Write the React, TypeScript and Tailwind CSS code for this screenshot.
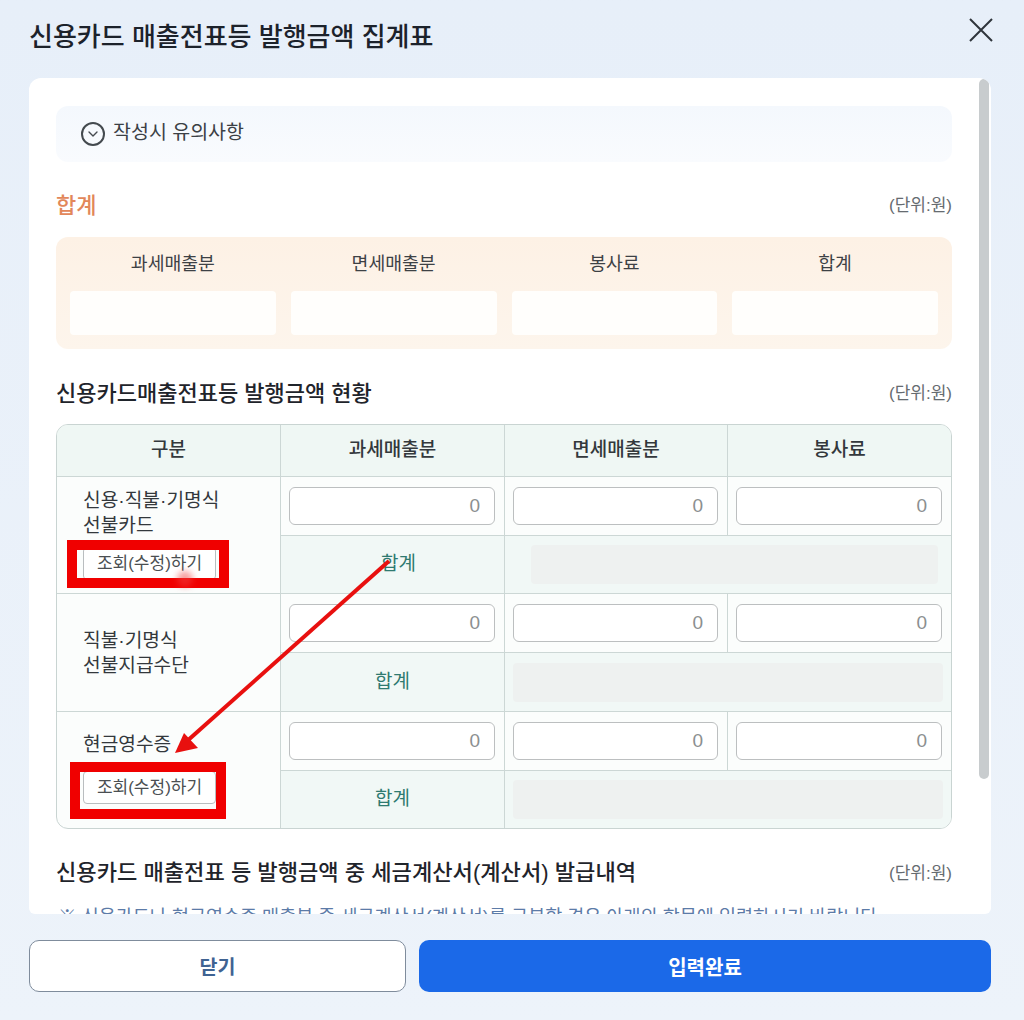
import { ChevronDown } from 'lucide-react'

const font = { fontFamily: '"Liberation Sans", "Noto Sans CJK KR", sans-serif' }

function Unit() {
  return <span className="text-[17px] text-[#666b70] mt-[2px]">(단위:원)</span>
}

function ZeroInput() {
  return (
    <input
      readOnly
      value="0"
      className="w-full h-[38px] rounded-md border border-[#bcbfc0] bg-white pr-3.5 text-right text-[19px] text-[#8b8f90] outline-none"
    />
  )
}

function InquiryButton() {
  return (
    <button className="w-[133px] h-[33px] rounded border border-[#b9bdbf] bg-white text-[17px] text-[#4b4f52]">
      조회(수정)하기
    </button>
  )
}

function AmountCells({ first }: { first?: boolean }) {
  return (
    <div className="flex-1 flex flex-col">
      <div className="h-[59px] flex border-b border-[#ccd7d5]">
        <div className="w-[224px] pl-[8px] pr-[9px] flex items-center border-r border-[#ccd7d5]">
          <ZeroInput />
        </div>
        <div className="w-[223px] pl-[8px] pr-[9px] flex items-center border-r border-[#ccd7d5]">
          <ZeroInput />
        </div>
        <div className="flex-1 pl-[8px] pr-[9px] flex items-center">
          <ZeroInput />
        </div>
      </div>
      <div className="flex-1 flex bg-[#f1f8f6]">
        <div className={`w-[224px] flex items-center justify-center border-r border-[#ccd7d5] text-[19px] text-[#2f7a70] ${first ? 'pl-3' : ''}`}>
          합계
        </div>
        <div className={`flex-1 flex items-center ${first ? 'pl-[26px] pr-[13px]' : 'px-2'}`}>
          <div className="w-full h-[39px] rounded bg-[#eef1f0]" />
        </div>
      </div>
    </div>
  )
}

export default function App() {
  return (
    <div style={font} className="relative w-[1024px] h-[1020px] overflow-hidden bg-gradient-to-b from-[#e7eff9] to-[#edf3fa] flex flex-col pl-[29px] pr-[33px]">
      <header className="h-[78px] shrink-0 flex items-start justify-between pt-[16px]">
        <h1 className="text-[26px] font-medium leading-[42px] text-[#1c222b]">신용카드 매출전표등 발행금액 집계표</h1>
        <svg width="26" height="26" viewBox="0 0 26 26" className="mt-[1px] -mr-[3px]" fill="none" stroke="#2f353c" strokeWidth="2">
          <path d="M2 2l22 22M24 2L2 24" />
        </svg>
      </header>

      <main className="relative h-[836px] shrink-0 overflow-hidden rounded-t-xl rounded-b-md bg-white pl-[27px] pr-[39px] pt-[28px]">
        <div className="absolute right-[2px] top-[1px] w-[10px] h-[700px] rounded-full bg-[#c8ccce]" />

        <div className="h-[56px] rounded-xl bg-gradient-to-b from-[#f4f8fd] to-[#f9fbfe] flex items-center gap-2 pl-[25px]">
          <span className="w-6 h-6 rounded-full border-2 border-[#444a4f] flex items-center justify-center text-[#444a4f]">
            <ChevronDown size={16} strokeWidth={2} />
          </span>
          <span className="text-[19.5px] text-[#3b4045] -mt-[2px]">작성시 유의사항</span>
        </div>

        <div className="mt-[28px] h-[30px] flex items-center justify-between">
          <h2 className="text-[22px] font-medium text-[#e2875a]">합계</h2>
          <Unit />
        </div>

        <div className="mt-[17px] h-[112px] rounded-xl bg-gradient-to-b from-[#fdf1e5] to-[#fdf5ec] px-[14px] pt-[14px] grid grid-cols-4 gap-x-[15px]">
          {['과세매출분', '면세매출분', '봉사료', '합계'].map((label) => (
            <div key={label} className="flex flex-col">
              <div className="h-[26px] mb-[14px] flex items-center justify-center text-[18.3px] text-[#3d4145]">{label}</div>
              <div className="h-[44px] rounded-sm bg-[#fffefc]" />
            </div>
          ))}
        </div>

        <div className="mt-[29px] h-[30px] flex items-center justify-between">
          <h2 className="text-[22px] font-medium text-[#1f242b]">신용카드매출전표등 발행금액 현황</h2>
          <Unit />
        </div>

        <div className="mt-[16px] h-[405px] rounded-xl border border-[#c9d4d2] overflow-hidden bg-[#fbfdfc] flex flex-col">
          <div className="h-[52px] shrink-0 flex bg-[#eff7f4] border-b border-[#ccd7d5] text-[19px] font-medium text-[#33383c]">
            <div className="w-[224px] flex items-center justify-center border-r border-[#ccd7d5]">구분</div>
            <div className="w-[224px] flex items-center justify-center border-r border-[#ccd7d5]">과세매출분</div>
            <div className="w-[223px] flex items-center justify-center border-r border-[#ccd7d5]">면세매출분</div>
            <div className="flex-1 flex items-center justify-center">봉사료</div>
          </div>

          <div className="h-[117px] flex border-b border-[#ccd7d5]">
            <div className="relative w-[224px] border-r border-[#ccd7d5] pl-[26px] pt-[11px] text-[19.2px] leading-[25px] text-[#33383c]">
              <p>신용·직불·기명식</p>
              <p>선불카드</p>
              <div className="mt-[9px]"><InquiryButton /></div>
              <div className="absolute left-[10px] top-[63px] w-[162px] h-[48px] border-[10px] border-[#f00000]" />
              <div className="absolute left-[120px] top-[94px] w-[16px] h-[16px] rounded-full bg-[#f04040]/50 blur-[3px]" />
            </div>
            <AmountCells first />
          </div>

          <div className="h-[118px] flex border-b border-[#ccd7d5]">
            <div className="w-[224px] border-r border-[#ccd7d5] pl-[26px] flex flex-col justify-center text-[19.2px] leading-[25px] text-[#33383c]">
              <p>직불·기명식</p>
              <p>선불지급수단</p>
            </div>
            <AmountCells />
          </div>

          <div className="flex-1 flex">
            <div className="relative w-[224px] border-r border-[#ccd7d5] pl-[26px] pt-[20px] text-[19.2px] leading-[25px] text-[#33383c]">
              <p>현금영수증</p>
              <div className="mt-[14px]"><InquiryButton /></div>
              <div className="absolute left-[13px] top-[50px] w-[156px] h-[57px] border-[10px] border-[#f00000]" />
            </div>
            <AmountCells />
          </div>
        </div>

        <div className="mt-[29px] h-[30px] flex items-center justify-between">
          <h2 className="text-[22.1px] font-medium text-[#1f242b]">신용카드 매출전표 등 발행금액 중 세금계산서(계산서) 발급내역</h2>
          <Unit />
        </div>
        <p className="mt-[15px] ml-[2px] text-[18.5px] text-[#5c7ba8] whitespace-nowrap">※ 신용카드나 현금영수증 매출분 중 세금계산서(계산서)를 구분할 경우 아래의 항목에 입력하시기 바랍니다.</p>
      </main>

      <footer className="mt-[26px] flex gap-[13px]">
        <button className="w-[377px] h-[52px] pt-[3px] rounded-[10px] border border-[#7f8c9c] bg-white text-[19.5px] font-bold text-[#3f6392]">닫기</button>
        <button className="flex-1 h-[52px] pt-[3px] rounded-[10px] bg-[#1b69e8] text-[20px] font-bold text-white">입력완료</button>
      </footer>

      <svg className="absolute inset-0 pointer-events-none" width="1024" height="1020" fill="none">
        <path d="M389 561L186 742" stroke="#e8100f" strokeWidth="4" />
        <path d="M175 753L184 733L198 748Z" fill="#e8100f" />
      </svg>
    </div>
  )
}
